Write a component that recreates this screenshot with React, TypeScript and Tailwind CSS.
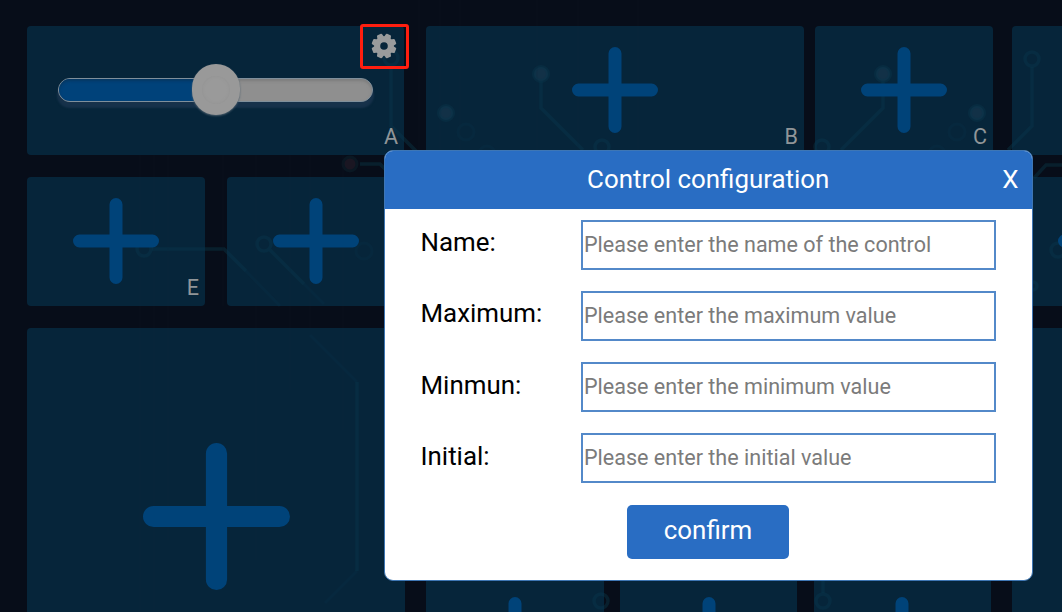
import type { ReactNode } from "react";

function Plus({ large = false }: { large?: boolean }) {
  return (
    <svg viewBox="0 0 86 86" className={large ? "ml-[2px] size-[147px] shrink-0" : "mb-[2px] size-[86px] shrink-0"} aria-hidden="true">
      <path
        d={large ? "M43 6.2V79.8M6.2 43H79.8" : "M43 6.5V79.5M6.5 43H79.5"}
        stroke="#004379"
        strokeWidth={large ? 12.4 : 13}
        strokeLinecap="round"
      />
    </svg>
  );
}

function Card({ className, label, children }: { className: string; label?: string; children?: ReactNode }) {
  return (
    <div className={`relative flex shrink-0 items-center justify-center rounded-[4px] bg-[#063650]/60 ${className}`}>
      {children}
      {label && <span className="absolute right-[6px] bottom-[5px] text-[21.6px] leading-[26px] text-[#909598]">{label}</span>}
    </div>
  );
}

function Gear() {
  const teeth = [22.5, 67.5, 112.5, 157.5, 202.5, 247.5, 292.5, 337.5];
  return (
    <svg viewBox="-13 -13 26 26" className="mr-[1px] mb-[1px] size-[26px]" aria-hidden="true">
      <g fill="#999b9c">
        <circle r="9.8" />
        {teeth.map((angle) => (
          <path key={angle} d="M-3.6 -8L-2.8 -11.6Q-2.6 -12.4 -1.8 -12.4H1.8Q2.6 -12.4 2.8 -11.6L3.6 -8Z" transform={`rotate(${angle})`} />
        ))}
      </g>
      <circle r="3.8" fill="#06253a" />
    </svg>
  );
}

function Slider() {
  return (
    <div className="relative -mt-[1px] flex h-[24px] w-[315px] rounded-full border-[1.5px] border-[#7f8f9b] bg-[#8f8f8f] shadow-[0_5px_2px_1px_#16314a]">
      <div className="h-full w-[158px] rounded-l-full bg-[#00427a] shadow-[inset_0_2px_3px_#063761]" />
      <div className="h-full flex-1 rounded-r-full shadow-[inset_0_2px_3px_#7c7c7c]" />
      <div className="absolute -top-[15px] left-[133px] flex h-[51px] w-[48px] items-center justify-center rounded-full bg-[#999999] shadow-[0_1px_2px_#4d5f6c]">
        <div className="size-[28px] rounded-full bg-[#9a9a9a] shadow-[inset_0_0_3px_#929292]" />
      </div>
    </div>
  );
}

function Circuit() {
  return (
    <svg viewBox="0 0 1062 612" className="absolute inset-0 h-full w-full" fill="none" aria-hidden="true">
      <g stroke="#0b3c4c" strokeOpacity="0.4" strokeWidth="3.5">
        <path d="M391 66V126L420 155M360 164H380L386 170" />
        <circle cx="391" cy="58" r="7" />
        <path d="M541 75V108L583 150" />
        <circle cx="602" cy="147" r="7" />
        <path d="M883 75V108L841 150" />
        <circle cx="822" cy="147" r="7" />
        <circle cx="1032" cy="59" r="7" />
        <path d="M1032 67V126L1008 150M1034 178L1046 165H1062" />
        <circle cx="144" cy="249" r="7" />
        <path d="M152 249H224L246 271" />
        <circle cx="264" cy="244" r="7" />
        <path d="M270 250L304 284" />
        <path d="M357 382V571" />
        <circle cx="601" cy="601" r="7" />
        <circle cx="823" cy="601" r="7" />
        <path d="M823 580V593" />
        <circle cx="1058" cy="250" r="7" />
        <circle cx="1033" cy="286" r="4" />
      </g>
      <g stroke="#0b3c4c" strokeOpacity="0.2" strokeWidth="3">
        <circle cx="466" cy="132" r="8" />
        <circle cx="487" cy="154" r="8" />
        <circle cx="957" cy="132" r="8" />
        <circle cx="937" cy="154" r="8" />
        <circle cx="364" cy="251" r="8" />
        <path d="M246 271L280 306M304 284L324 304M310 335L357 382M357 571L325 603" />
      </g>
      <g fill="#242b3a" stroke="#0b303e" strokeOpacity="0.5" strokeWidth="4">
        <circle cx="541" cy="74" r="7" />
        <circle cx="446" cy="113" r="7" />
        <circle cx="883" cy="74" r="7" />
        <circle cx="977" cy="113" r="7" />
      </g>
      <circle cx="350" cy="164" r="7" fill="#1a1622" stroke="#0a1722" strokeWidth="3" />
      <g stroke="#151526" strokeOpacity="0.3">
        <path d="M140 155V612M154 155V612M168 155V540M223 155V306M256 155V560M290 155V390M310 155V328M343 155V430M419 0V150M440 0V150M460 0V150M537 0V150M578 0V150M638 0V150" />
      </g>
    </svg>
  );
}

const fields = [
  { label: "Name:", placeholder: "Please enter the name of the control" },
  { label: "Maximum:", placeholder: "Please enter the maximum value" },
  { label: "Minmun:", placeholder: "Please enter the minimum value" },
  { label: "Initial:", placeholder: "Please enter the initial value" },
];

function ConfigurationDialog() {
  return (
    <section role="dialog" className="absolute top-[150px] left-[384px] flex h-[431px] w-[648.5px] flex-col overflow-hidden rounded-[9px] border border-[#3e76b4] bg-white">
      <header className="relative flex h-[58px] shrink-0 items-center justify-center bg-[#296dc3] pb-[2px] text-[25.9px] text-white">
        <h1>Control configuration</h1>
        <button className="absolute right-[13px]">X</button>
      </header>
      <div className="flex flex-col gap-[21.3px] pt-[10.5px] pr-[35.5px] pl-[35.5px]">
        {fields.map((field) => (
          <label key={field.label} className="flex h-[50px] items-center justify-between text-[25.9px] text-black">
            <span className="pb-[4px]">{field.label}</span>
            <input
              placeholder={field.placeholder}
              className="h-[50px] w-[415px] border-2 border-[#5389c9] bg-white px-px pb-[1px] text-[21.55px] outline-none placeholder:text-[#7b7b7b] placeholder:opacity-100"
            />
          </label>
        ))}
      </div>
      <button className="mt-[21.5px] ml-[242px] h-[54px] w-[162px] shrink-0 rounded-[5px] bg-[#296dc3] pb-[2px] text-[25.9px] text-white">confirm</button>
    </section>
  );
}

export default function App() {
  return (
    <main className="relative h-[612px] w-[1062px] overflow-hidden bg-[#070d19] font-[Roboto,sans-serif]">
      <Circuit />
      <div className="relative flex flex-col gap-[22px] pt-[26px] pl-[27px]">
        <div className="flex h-[129px]">
          <Card className="w-[377px]" label="A">
            <Slider />
            <div className="absolute -top-[2px] right-[-5px] flex h-[45px] w-[49px] items-center justify-center rounded-[3px] border-3 border-[#ff1e0f]">
              <Gear />
            </div>
          </Card>
          <Card className="ml-[22px] w-[378px]" label="B"><Plus /></Card>
          <Card className="ml-[11px] w-[178px]" label="C"><Plus /></Card>
          <Card className="ml-[19px] w-[178px]" />
        </div>
        <div className="flex h-[129px]">
          <Card className="w-[178px]" label="E"><Plus /></Card>
          <Card className="ml-[22px] w-[178px]"><Plus /></Card>
          <Card className="ml-[607px] w-[178px]"><Plus /></Card>
        </div>
        <div className="flex h-[377px]">
          <Card className="w-[377.5px]"><Plus large /></Card>
          <div className="ml-[21.5px] flex w-[565px] shrink-0 items-end justify-between">
            <Card className="h-[129px] w-[177.5px]"><Plus /></Card>
            <Card className="h-[129px] w-[177.5px]"><Plus /></Card>
            <Card className="h-[129px] w-[177.5px]"><Plus /></Card>
          </div>
          <Card className="ml-[21px] w-[178px]" />
        </div>
      </div>
      <ConfigurationDialog />
    </main>
  );
}
